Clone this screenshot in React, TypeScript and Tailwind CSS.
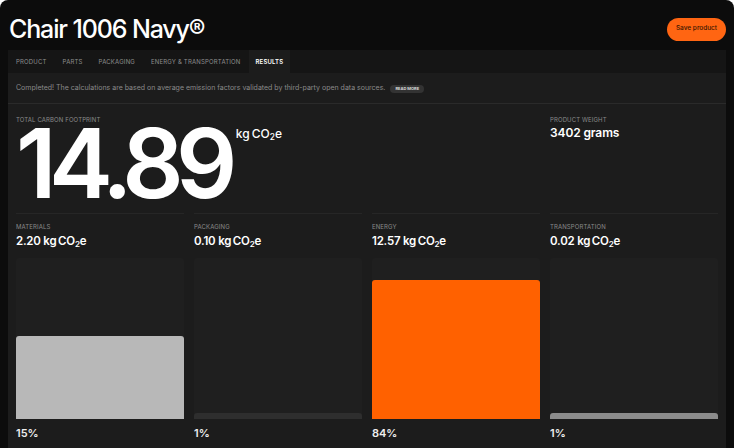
import React from 'react';

const tabs = ['Product', 'Parts', 'Packaging', 'Energy & Transportation', 'Results'];

const breakdown = [
  { label: 'Materials', value: '2.20', pct: '15%', height: 83, color: 'bg-[#b8b8b8]' },
  { label: 'Packaging', value: '0.10', pct: '1%', height: 6, color: 'bg-[#2e2e2e]' },
  { label: 'Energy', value: '12.57', pct: '84%', height: 139, color: 'bg-[#ff6100]' },
  { label: 'Transportation', value: '0.02', pct: '1%', height: 6, color: 'bg-[#8c8c8c]' },
];

function Unit({ className = '' }: { className?: string }) {
  return (
    <span className={className}>
      kg&#8201;CO<span className="relative top-[0.25em] text-[0.7em]">2</span>e
    </span>
  );
}

export default function App() {
  return (
    <div className="h-[448px] overflow-hidden bg-white">
      <div
        className="h-full rounded-t-[8px] bg-[#0c0c0c] text-white"
        style={{ fontFamily: 'Inter, "Liberation Sans", sans-serif' }}
      >
        {/* Header */}
        <div className="flex h-[50px] items-center justify-between pl-[9px] pr-[8px] pt-[8px]">
          <h1 className="text-[25px] font-medium leading-none tracking-[-0.045em]">Chair 1006 Navy®</h1>
          <button className="h-[23px] w-[59px] rounded-full bg-[#ff6512] text-[6.5px] font-medium text-[#3b1600]">
            Save product
          </button>
        </div>

        {/* Panel */}
        <div className="mx-[8px] h-[398px] overflow-hidden bg-[#1c1c1c]">
          {/* Tabs */}
          <div className="flex h-[23px] bg-[#151515]">
            {tabs.map((t) => (
              <div
                key={t}
                className={
                  t === 'Results'
                    ? 'flex items-center bg-[#1c1c1c] px-[7px] text-[6px] font-semibold uppercase tracking-[0.03em] text-white'
                    : 'flex items-center px-[8px] text-[6px] uppercase tracking-[0.03em] text-[#8e8e8e]'
                }
              >
                {t}
              </div>
            ))}
          </div>

          {/* Info row */}
          <div className="flex h-[31px] items-center gap-[5px] border-b border-[#2a2a2a] px-[8px] pt-[1px]">
            <p className="text-[7px] text-[#8a8a8a]">
              Completed! The calculations are based on average emission factors validated by third-party open data sources.
            </p>
            <span className="flex h-[8px] items-center rounded-full bg-[#333333] px-[5px] text-[4px] font-bold text-[#dddddd]">
              READ MORE
            </span>
          </div>

          {/* Totals */}
          <div className="grid h-[109px] grid-cols-4 gap-x-[10px] px-[8px] pt-[11px]">
            <div className="col-span-3">
              <div className="text-[6px] uppercase leading-[10px] tracking-[0.02em] text-[#8a8a8a]">
                Total carbon footprint
              </div>
              <div className="flex items-start">
                <span className="text-[96px] font-semibold leading-[0.8] tracking-[-0.08em]">14.89</span>
                <Unit className="ml-[6px] mt-[3px] text-[12px] font-medium leading-none" />
              </div>
            </div>
            <div>
              <div className="text-[6px] uppercase leading-[10px] tracking-[0.02em] text-[#8a8a8a]">
                Product weight
              </div>
              <div className="mt-[2px] text-[12px] font-semibold leading-none tracking-[-0.01em]">3402 grams</div>
            </div>
          </div>

          {/* Breakdown */}
          <div className="grid grid-cols-4 gap-x-[10px] px-[8px]">
            {breakdown.map((b) => (
              <div key={b.label} className="border-t border-[#262626] pt-[9px]">
                <div className="text-[6px] uppercase leading-[8px] tracking-[0.02em] text-[#8a8a8a]">{b.label}</div>
                <div className="mt-[2px] text-[11.5px] font-semibold leading-[16px] tracking-[-0.02em]">
                  {b.value} <Unit />
                </div>
                <div className="mt-[8px] flex h-[161px] flex-col justify-end rounded-t-[3px] bg-[#1f1f1f]">
                  <div className={`rounded-t-[3px] ${b.color}`} style={{ height: b.height }} />
                </div>
                <div className="mt-[9px] text-[11px] font-semibold leading-none text-[#eeeeee]">{b.pct}</div>
              </div>
            ))}
          </div>
        </div>
      </div>
    </div>
  );
}
